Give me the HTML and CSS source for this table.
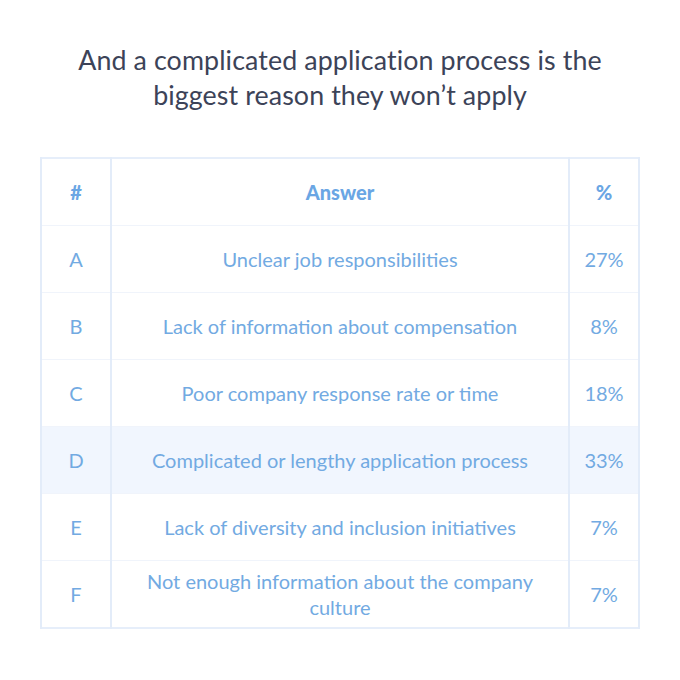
FILE: index.html
```html
<!DOCTYPE html>
<html lang="en">
<head>
<meta charset="utf-8">
<link rel="stylesheet" href="styles.css">
</head>
<body>
<div class="page">
  <h1 class="title">And a complicated application process is the<br>biggest reason they won’t apply</h1>
  <table class="survey">
    <colgroup><col class="c-id"><col class="c-ans"><col class="c-pct"></colgroup>
    <thead>
      <tr><th>#</th><th>Answer</th><th>%</th></tr>
    </thead>
    <tbody>
      <tr><td>A</td><td>Unclear job responsibilities</td><td>27%</td></tr>
      <tr><td>B</td><td>Lack of information about compensation</td><td>8%</td></tr>
      <tr><td>C</td><td>Poor company response rate or time</td><td>18%</td></tr>
      <tr class="hl"><td>D</td><td>Complicated or lengthy application process</td><td>33%</td></tr>
      <tr><td>E</td><td>Lack of diversity and inclusion initiatives</td><td>7%</td></tr>
      <tr><td>F</td><td class="wrap">Not enough information about the company culture</td><td>7%</td></tr>
    </tbody>
  </table>
</div>
</body>
</html>
```
FILE: styles.css
```css
html, body { margin: 0; padding: 0; background: #ffffff; }
.page {
  width: 680px;
  height: 680px;
  box-sizing: border-box;
  padding-top: 43px;
  display: flex;
  flex-direction: column;
  align-items: center;
  font-family: Lato, "Noto Sans", sans-serif;
}
.title {
  margin: 0;
  font-weight: 400;
  font-size: 26.8px;
  line-height: 35px;
  color: #3c4358;
  text-align: center;
  letter-spacing: 0.1px;
}
.survey {
  margin-top: 44px;
  width: 600px;
  border-collapse: collapse;
  table-layout: fixed;
  border: 2px solid #e6eefa;
  color: #72aae2;
  font-size: 20px;
}
.c-id { width: 70px; }
.c-pct { width: 70px; }
.survey th, .survey td {
  text-align: center;
  vertical-align: middle;
  height: 66px;
  padding: 0 8px;
  border-top: 1px solid #f0f4fb;
  border-bottom: 1px solid #f0f4fb;
  border-left: 2px solid #e3ecf9;
  border-right: 2px solid #e3ecf9;
  line-height: 26px;
}
.survey th { font-weight: 900; color: #6aa6e4; font-size: 20px; }
.survey .hl td { background: #f1f6fe; }
.survey td.wrap { padding: 0 18px; }
```
